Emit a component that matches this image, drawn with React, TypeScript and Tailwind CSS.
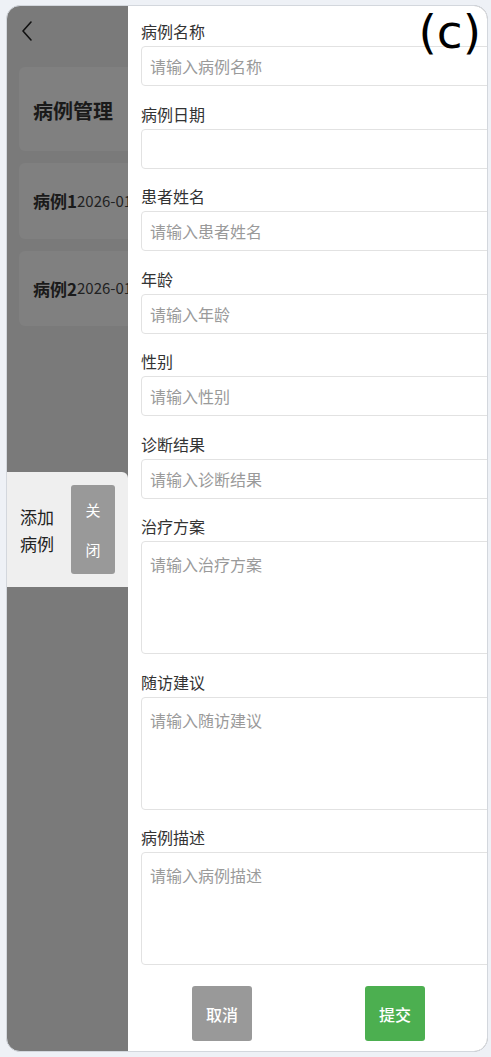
import React from "react";

const font = { fontFamily: '"Noto Sans CJK SC", "Noto Sans", sans-serif' };

function Field({ label, placeholder, area }: { label: string; placeholder?: string; area?: boolean }) {
  return (
    <div className="flex flex-col">
      <div className="text-[16px] leading-[24px] text-[#333]">{label}</div>
      {area ? (
        <textarea
          placeholder={placeholder}
          className="mt-[3px] h-[113px] w-[380px] resize-none rounded-[4px] border border-[#e2e2e2] px-[8px] py-[10px] text-[16px] leading-[24px] text-[#333] placeholder:text-[#9a9a9a] outline-none"
          style={font}
        />
      ) : (
        <input
          placeholder={placeholder}
          className="mt-[3px] h-[40px] w-[380px] rounded-[4px] border border-[#e2e2e2] px-[8px] text-[16px] text-[#333] placeholder:text-[#9a9a9a] outline-none"
          style={font}
        />
      )}
    </div>
  );
}

export default function App() {
  return (
    <div className="h-[1057px] w-[491px] bg-[#eef1f6] pl-[6px] pt-[5px]" style={font}>
      <div className="relative flex h-[1047px] w-[482px] overflow-hidden rounded-[14px] border border-[#d3d7dd] bg-[#7a7a7a]">
        {/* left dimmed page */}
        <div className="flex w-[121px] shrink-0 flex-col overflow-hidden">
          <div className="flex h-[61px] items-start pl-[13px] pt-[14px]">
            <svg width="14" height="22" viewBox="0 0 14 22" fill="none">
              <path d="M11 2 L3 11 L11 20" stroke="#111" strokeWidth="1.6" strokeLinecap="round" strokeLinejoin="round" />
            </svg>
          </div>
          <div className="ml-[12px] flex w-[200px] shrink-0 flex-col gap-[12px]">
            <div className="flex h-[84px] w-[200px] items-center rounded-[6px] bg-[#808080] pl-[14px] pt-[4px]">
              <span className="whitespace-nowrap text-[20px] font-bold text-[#1a1a1a]">病例管理</span>
            </div>
            <div className="flex h-[76px] w-[200px] items-center whitespace-nowrap rounded-[6px] bg-[#808080] pl-[14px]">
              <span className="text-[17px] font-bold text-[#1a1a1a]">病例1</span>
              <span className="text-[15px] text-[#222]">2026-01-01</span>
            </div>
            <div className="flex h-[75px] w-[200px] items-center whitespace-nowrap rounded-[6px] bg-[#808080] pl-[14px]">
              <span className="text-[17px] font-bold text-[#1a1a1a]">病例2</span>
              <span className="text-[15px] text-[#222]">2026-01-02</span>
            </div>
          </div>
          <div className="mt-[146px] flex h-[115px] items-center rounded-tr-[6px] bg-[#efefef] pl-[13px]">
            <div className="w-[40px] text-[17px] leading-[27px] text-[#222]">添加病例</div>
            <div className="ml-[11px] flex h-[89px] w-[44px] flex-col items-center justify-center rounded-[3px] bg-[#999999] text-[15px] leading-[40px] text-white">
              <span>关</span>
              <span>闭</span>
            </div>
          </div>
        </div>

        {/* drawer */}
        <div className="flex w-[400px] shrink-0 flex-col bg-white pl-[13px] pt-[13px]">
          <div className="flex flex-col gap-[15.5px]">
            <Field label="病例名称" placeholder="请输入病例名称" />
            <Field label="病例日期" />
            <Field label="患者姓名" placeholder="请输入患者姓名" />
            <Field label="年龄" placeholder="请输入年龄" />
            <Field label="性别" placeholder="请输入性别" />
            <Field label="诊断结果" placeholder="请输入诊断结果" />
            <Field label="治疗方案" placeholder="请输入治疗方案" area />
            <Field label="随访建议" placeholder="请输入随访建议" area />
            <Field label="病例描述" placeholder="请输入病例描述" area />
          </div>
          <div className="mt-[21px] flex pl-[51px]">
            <button className="h-[55px] w-[60px] rounded-[3px] bg-[#999999] text-[16px] font-medium text-white">取消</button>
            <button className="ml-[113px] h-[55px] w-[60px] rounded-[3px] bg-[#4caf50] text-[16px] font-medium text-white">提交</button>
          </div>
        </div>

        <div
          className="absolute right-[6px] top-[-4px] text-[47px] leading-[60px] text-black"
          style={{ fontFamily: '"DejaVu Sans", sans-serif' }}
        >
          (c)
        </div>
      </div>
    </div>
  );
}
